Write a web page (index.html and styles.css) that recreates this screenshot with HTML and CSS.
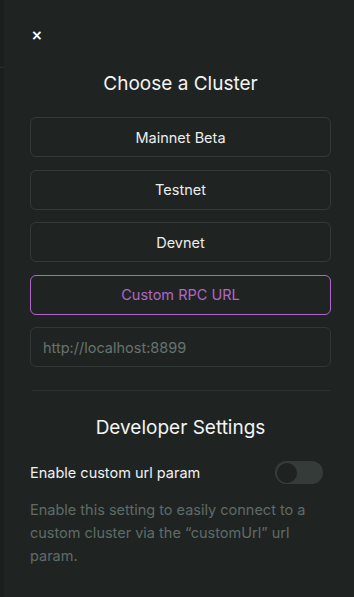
FILE: index.html
```html
<!DOCTYPE html>
<html>
<head>
<meta charset="utf-8">
<link rel="stylesheet" href="styles.css">
</head>
<body>
<div class="page">
  <div class="edge"><div class="edge-line"></div></div>
  <aside class="panel">
    <button class="close" aria-label="Close">&times;</button>
    <h2 class="title">Choose a Cluster</h2>
    <div class="clusters">
      <button class="cluster">Mainnet Beta</button>
      <button class="cluster">Testnet</button>
      <button class="cluster">Devnet</button>
      <button class="cluster active">Custom RPC URL</button>
      <input class="url" type="text" placeholder="http://localhost:8899">
    </div>
    <hr class="divider">
    <h2 class="title dev">Developer Settings</h2>
    <div class="setting">
      <span class="setting-label">Enable custom url param</span>
      <span class="toggle"><span class="knob"></span></span>
    </div>
    <p class="hint">Enable this setting to easily connect to a custom cluster via the “customUrl” url param.</p>
  </aside>
</div>
</body>
</html>
```
FILE: styles.css
```css
html, body {
  margin: 0;
  padding: 0;
  height: 100%;
  background: #1e2322;
}
body {
  font-family: Inter, "Noto Sans", sans-serif;
  color: #eef0ef;
}
.page {
  display: flex;
  height: 597px;
  overflow: hidden;
}
.edge {
  width: 4px;
  flex: none;
  background: #1b1f1e;
  padding-top: 67px;
}
.edge-line {
  height: 1px;
  background: #2a302e;
}
.panel {
  flex: 1;
  background: #1f2423;
  padding: 0 23px 0 26px;
  display: flex;
  flex-direction: column;
}
.close {
  align-self: flex-start;
  background: none;
  border: none;
  color: #ffffff;
  font-family: "DejaVu Sans", sans-serif;
  font-size: 14px;
  font-weight: bold;
  line-height: 14px;
  padding: 0;
  margin: 28px 0 0 1px;
  width: 10px;
  cursor: pointer;
}
.title {
  margin: 28px 0 0;
  text-align: center;
  font-size: 19px;
  font-weight: 400;
  line-height: 28px;
  color: #f3f4f4;
}
.clusters {
  margin-top: 19px;
  display: flex;
  flex-direction: column;
  gap: 12.5px;
}
.cluster {
  height: 40px;
  border: 1px solid #343a38;
  border-radius: 6px;
  background: transparent;
  color: #eceeed;
  font-family: inherit;
  font-size: 14.5px;
  font-weight: 400;
  cursor: pointer;
}
.cluster.active {
  border-color: #b264cc;
  color: #b266c8;
}
.url {
  height: 40px;
  box-sizing: border-box;
  border: 1px solid #313735;
  border-radius: 6px;
  background: transparent;
  padding: 0 12px;
  font-family: inherit;
  font-size: 14.5px;
  color: #eceeed;
}
.url::placeholder {
  color: #67736f;
}
.divider {
  border: none;
  border-top: 1px solid #2a302e;
  margin: 23px 0 0 2px;
}
.title.dev {
  margin-top: 23px;
}
.setting {
  margin-top: 19px;
  display: flex;
  align-items: center;
  justify-content: space-between;
  padding-right: 8px;
}
.setting-label {
  font-size: 14.5px;
  font-weight: 400;
  color: #f0f1f1;
}
.toggle {
  width: 48px;
  height: 23px;
  border-radius: 12px;
  background: #353b39;
  display: flex;
  align-items: center;
  padding: 0 2px;
  box-sizing: border-box;
}
.knob {
  width: 20px;
  height: 20px;
  border-radius: 50%;
  background: #1e2322;
}
.hint {
  margin: 14px 0 0;
  font-size: 14.5px;
  line-height: 23px;
  color: #5f6b67;
  padding-right: 6px;
}
```
